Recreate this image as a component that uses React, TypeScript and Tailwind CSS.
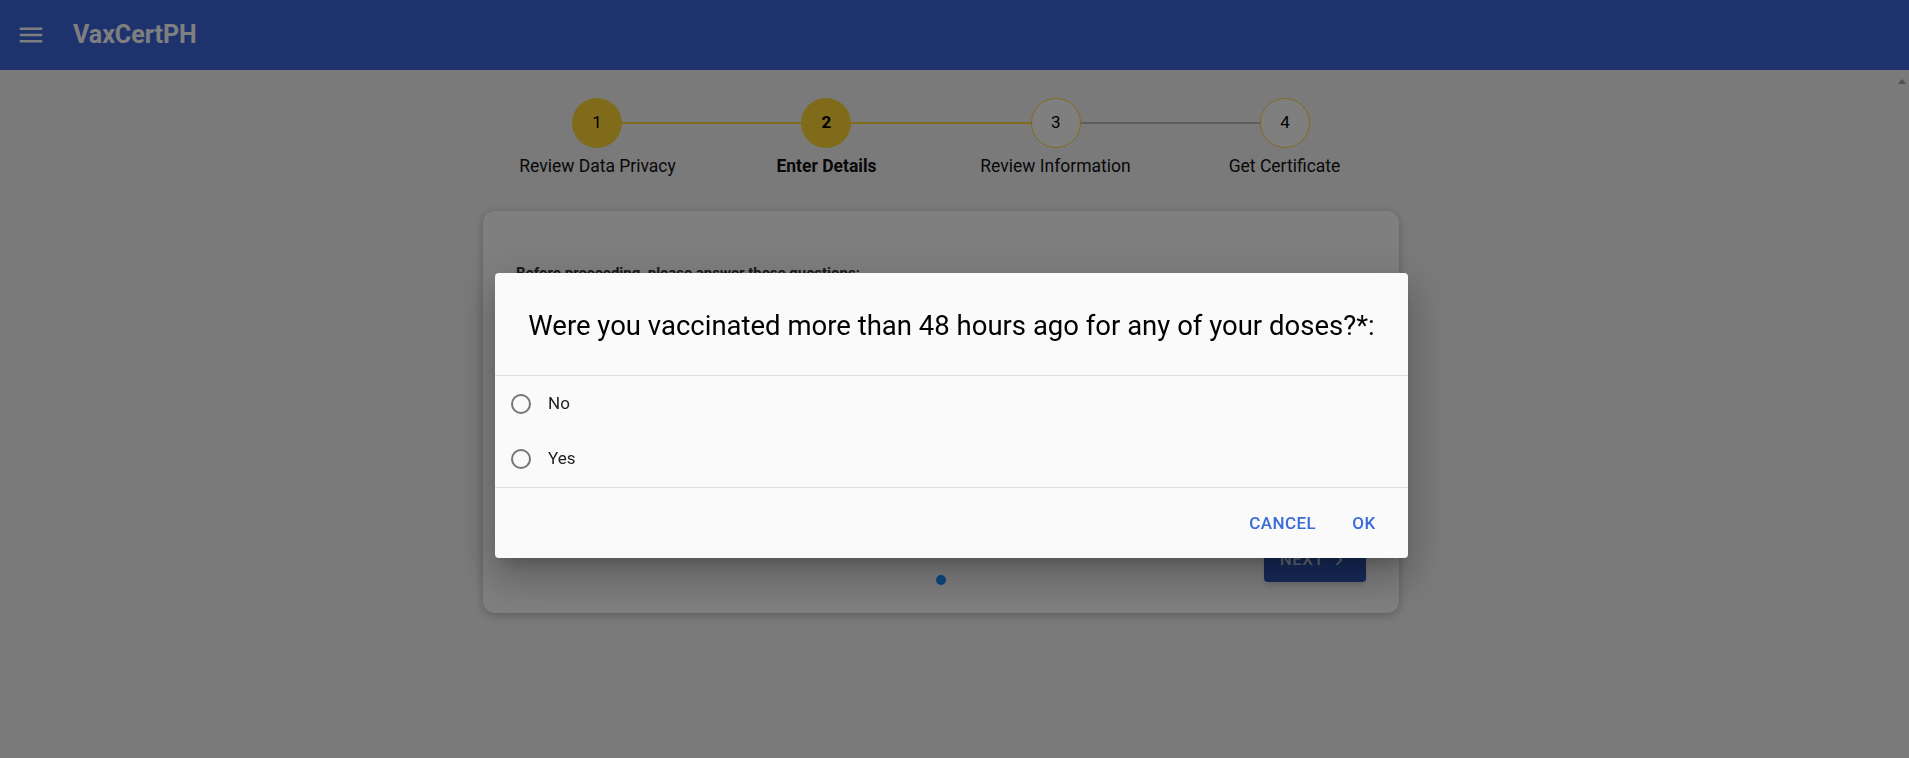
import React, { useState } from 'react';

const steps = ['Review Data Privacy', 'Enter Details', 'Review Information', 'Get Certificate'];
const activeStep = 1;

const MenuIcon = () =>
<svg viewBox="0 0 24 24" className="h-[30px] w-[30px] fill-white">
    <path d="M3 18h18v-2H3v2zm0-5h18v-2H3v2zm0-7v2h18V6H3z" />
  </svg>;


const Stepper = () => {
  return (
    <div className="w-[916px] mt-[28px]">
      <div className="flex items-center px-[89px]">
        {steps.map((label, i) =>
        <React.Fragment key={label}>
            {i > 0 &&
          <div className={`flex-1 h-[2px] ${i <= activeStep + 1 ? 'bg-[#ffd633]' : 'bg-[#bdbdbd]'}`} />
          }
            <div
            className={`w-[50px] h-[50px] rounded-full flex items-center justify-center text-[17px] text-black ${i <= activeStep ? 'bg-[#ffd633]' : 'border-[1.5px] border-[#ffd633] bg-white'} ${i === activeStep ? 'font-bold' : ''}`}>
              {i + 1}
            </div>
          </React.Fragment>
        )}
      </div>
      <div className="grid grid-cols-4 mt-[6px]">
        {steps.map((label, i) =>
        <div
          key={label}
          className={`text-center text-[17.5px] leading-[24px] text-[#111] ${i === activeStep ? 'font-bold' : ''}`}>
            {label}
          </div>
        )}
      </div>
    </div>);

};

const QuestionCard = () =>
<div className="w-[916px] h-[402px] mt-[33px] bg-white rounded-xl shadow-[0_2px_10px_rgba(0,0,0,0.25)] flex flex-col px-[33px] pt-[52px] pb-[31px]">
    <p className="text-[15px] leading-[20px] font-bold text-[#333]">
      Before proceeding, please answer these questions:
    </p>
    <div className="mt-auto flex items-end justify-between">
      <div className="w-[102px]" />
      <div className="w-[10px] h-[10px] rounded-full bg-[#1890ff] -mb-[3px]" />
      <button className="w-[102px] h-[44px] rounded-[4px] bg-[#2e54b4] text-white/75 text-[17px] font-medium tracking-[0.4px] flex items-center justify-center gap-1 shadow-md">
        NEXT
        <svg viewBox="0 0 24 24" className="h-[22px] w-[22px] fill-current">
          <path d="M10 6 8.59 7.41 13.17 12l-4.58 4.59L10 18l6-6z" />
        </svg>
      </button>
    </div>
  </div>;


const Radio = ({ checked }: {checked: boolean;}) =>
<span className="w-[20px] h-[20px] rounded-full border-2 border-[#757575] flex items-center justify-center">
    {checked && <span className="w-[10px] h-[10px] rounded-full bg-[#3a6bd9]" />}
  </span>;


const QuestionDialog = () => {
  const [value, setValue] = useState<string | null>(null);
  const options = ['No', 'Yes'];

  return (
    <div className="fixed inset-0 z-20 flex justify-center pt-[273px] pr-[6px]">
      <div className="w-[913px] h-[285px] bg-[#fafafa] rounded-[4px] shadow-[0_11px_15px_-7px_rgba(0,0,0,0.2),0_24px_38px_3px_rgba(0,0,0,0.14),0_9px_46px_8px_rgba(0,0,0,0.12)] flex flex-col">
        <div className="h-[102px] flex items-center justify-center pt-[4px]">
          <h2 className="text-[27.5px] leading-[32px] text-black">
            Were you vaccinated more than 48 hours ago for any of your doses?*:
          </h2>
        </div>
        <div className="border-t border-b border-[#e0e0e0] h-[113px] flex flex-col">
          {options.map((opt) =>
          <label
            key={opt}
            onClick={() => setValue(opt)}
            className="h-[55px] flex items-center pl-[16px] gap-[17px] cursor-pointer">
              <Radio checked={value === opt} />
              <span className="text-[17px] text-[#222]">{opt}</span>
            </label>
          )}
        </div>
        <div className="flex-1 flex items-center justify-end pr-[12px] gap-[8px] pt-[2px]">
          <button className="px-[8px] h-[36px] text-[17px] font-medium tracking-[0.4px] text-[#3a6bd9]">
            CANCEL
          </button>
          <button className="w-[64px] h-[36px] text-[17px] font-medium tracking-[0.4px] text-[#3a6bd9]">
            OK
          </button>
        </div>
      </div>
    </div>);

};

export default function App() {
  return (
    <div className="h-screen overflow-hidden flex flex-col bg-[#f5f5f5] font-['Roboto',sans-serif]">
      <header className="h-[70px] shrink-0 bg-[#3c66dc] flex items-center pl-[16px]">
        <MenuIcon />
        <span className="ml-[27px] text-[25px] font-bold text-white">VaxCertPH</span>
      </header>
      <div className="flex-1 flex">
        <main className="flex-1 flex flex-col items-center pr-[12px]">
          <Stepper />
          <QuestionCard />
        </main>
        <div className="w-[15px] flex justify-center pt-[9px]">
          <div className="w-0 h-0 border-l-[4.5px] border-r-[4.5px] border-b-[5px] border-l-transparent border-r-transparent border-b-[#a0a0a0]" />
        </div>
      </div>
      <div className="fixed inset-0 z-10 bg-black/50" />
      <QuestionDialog />
    </div>);

}
